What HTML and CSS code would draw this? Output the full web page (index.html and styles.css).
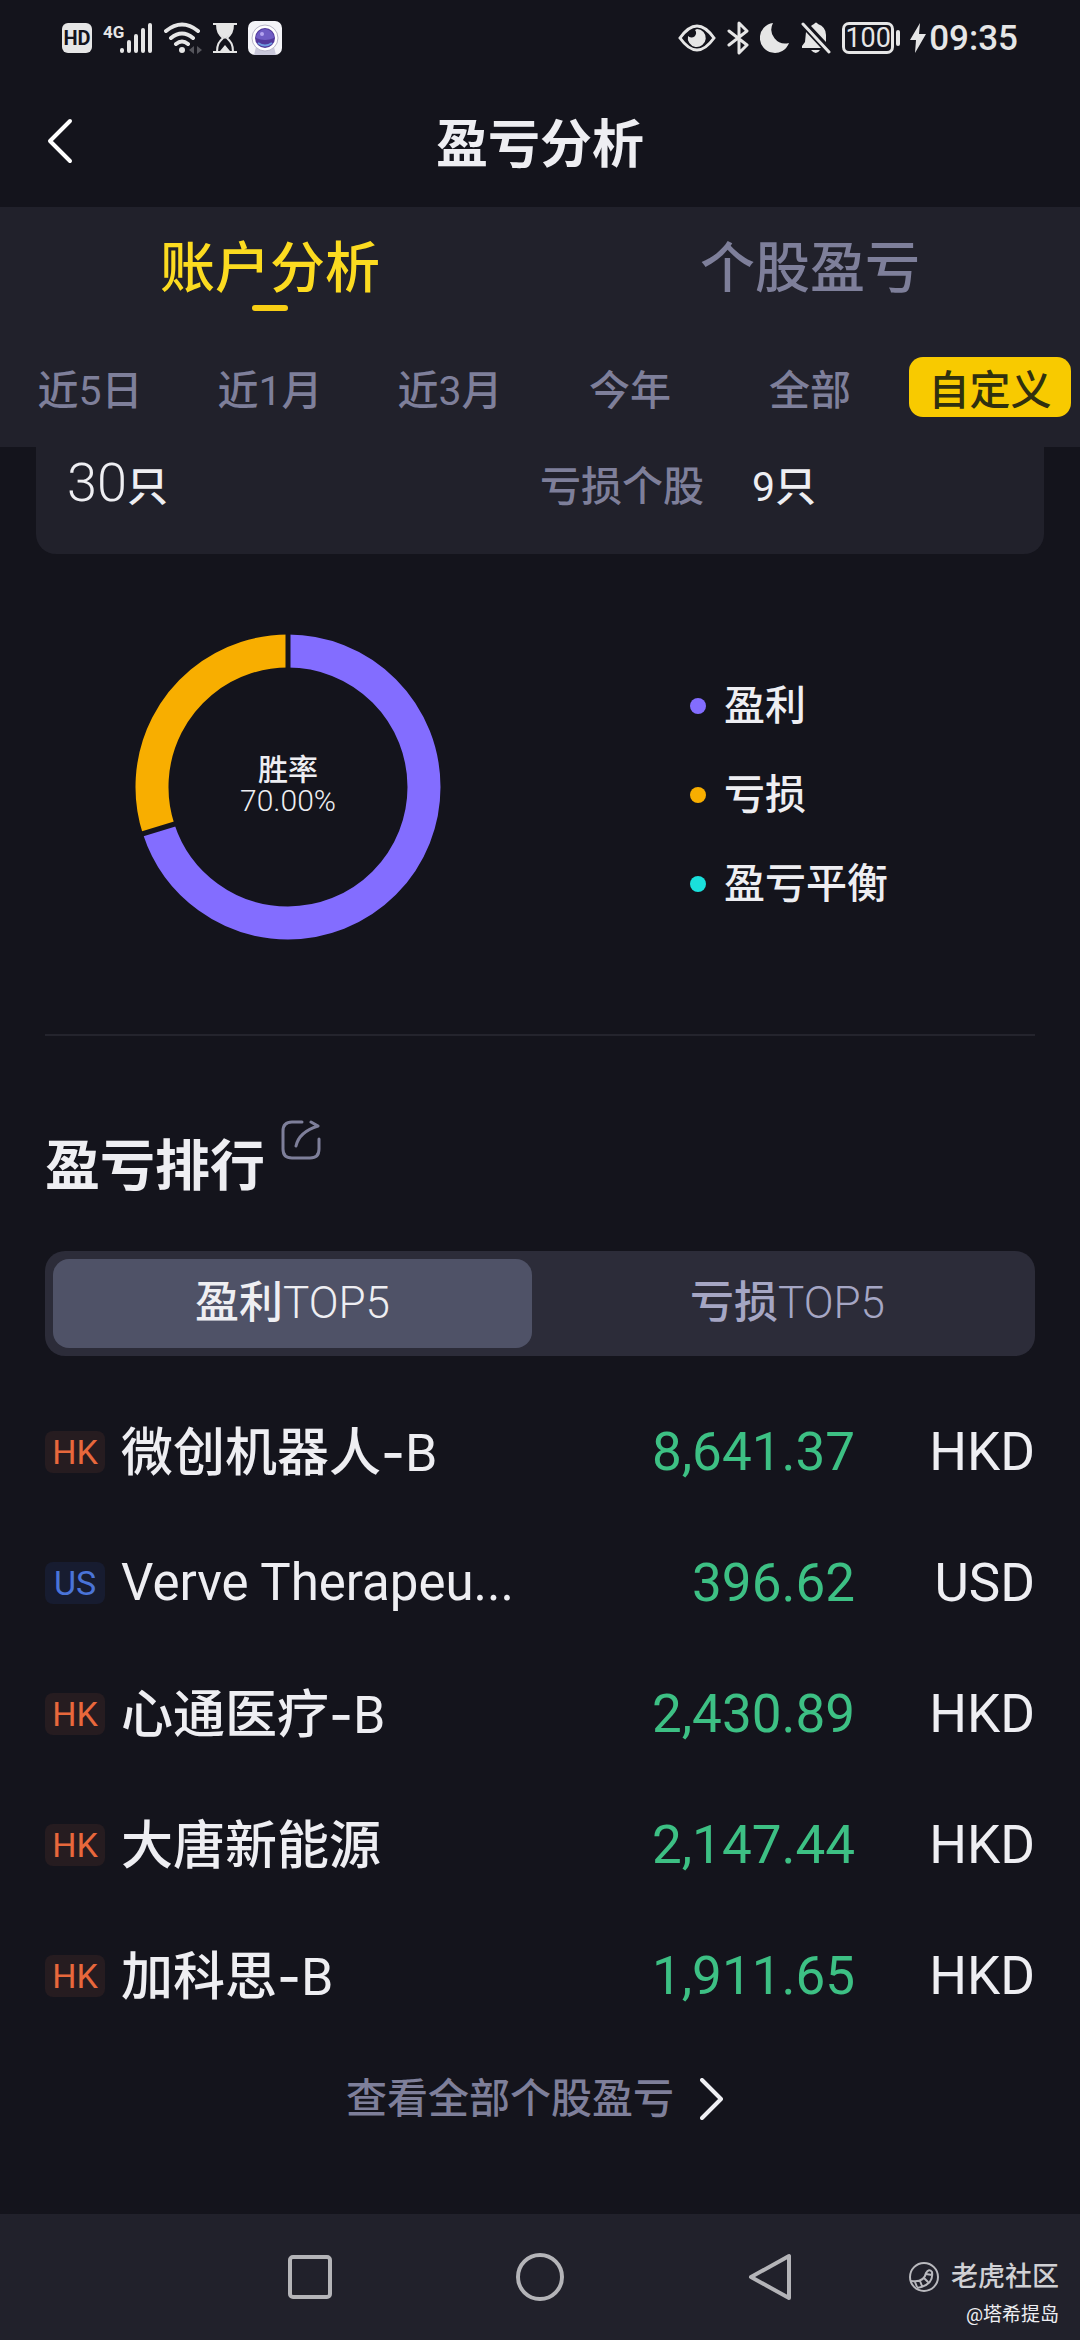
FILE: index.html
```html
<!DOCTYPE html>
<html lang="zh-CN">
<head>
<meta charset="utf-8">
<meta name="viewport" content="width=device-width, initial-scale=1">
<title>盈亏分析</title>
<link rel="stylesheet" href="styles.css">
</head>
<body>
<div class="app">
  <div class="status">
    <div class="status-group">
      <span class="hd">HD</span>
      <svg width="50" height="32" viewBox="0 0 50 32" fill="none" stroke="#e6e6e6" stroke-width="4" stroke-linecap="round"><text class="net" x="0" y="16">4G</text><path d="M19 28v1M26 20v9M33 14v15M40 8v21M47 3v26"/></svg>
      <svg width="38" height="32" viewBox="0 0 38 32" fill="none" stroke="#e6e6e6" stroke-width="4" stroke-linecap="round"><path d="M2 9Q18 -4 34 9M7 16q11-9 22 0M12 22q6-5 12 0"/><circle cx="18" cy="28" r="3" fill="#e6e6e6" stroke="none"/><path d="M30 24v8l-5-4zM33 24v8l5-4z" fill="#55555c" stroke="none"/></svg>
      <svg width="24" height="32" viewBox="0 0 24 32" fill="none" stroke="#e6e6e6" stroke-width="2"><path d="M0 2h24M0 30h24M4 2c0 8 2 10 6 14c-4 4-6 6-6 14M20 2c0 8-2 10-6 14c4 4 6 6 6 14"/><path d="M4 2h16c0 8-3 10-8 15C7 12 4 10 4 2zM7 29l5-6l5 6z" fill="#e6e6e6" stroke="none"/></svg>
      <svg width="34" height="34" viewBox="0 0 34 34"><rect width="34" height="34" rx="7" fill="#f4f4f8"/><path d="M8 26h18l2 8H6z" fill="#c9c8da"/><circle cx="17" cy="17" r="13" fill="#fff" stroke="#b7b4c8"/><circle cx="17" cy="17" r="10" fill="#51389a"/><path d="M8 17a9 9 0 0 1 18 0q-9 4-18 0" fill="#6f5cc4"/><path d="M10 22q7 5 14 0" stroke="#6f9be0" stroke-width="2" fill="none"/><circle cx="14" cy="13" r="2" fill="#b4a4f0"/></svg>
    </div>
    <div class="status-group">
      <svg width="38" height="28" viewBox="0 0 38 28" fill="none" stroke="#e6e6e6" stroke-width="3"><path d="M2 14Q19-10 36 14Q19 38 2 14z"/><path d="M19 5a9 9 0 1 1-9 7a4 4 0 0 0 7-6z" fill="#e6e6e6" stroke="none"/></svg>
      <svg width="22" height="34" viewBox="0 0 22 34" fill="none" stroke="#e6e6e6" stroke-width="3" stroke-linejoin="round" stroke-linecap="round"><path d="M2 10l18 14l-8 8V2l8 8L2 24"/></svg>
      <svg width="30" height="32" viewBox="0 0 30 32"><path d="M13 1A15 15 0 1 0 29 21A14 14 0 0 1 13 1z" fill="#e6e6e6"/></svg>
      <svg width="30" height="34" viewBox="0 0 30 34" fill="#e6e6e6"><path d="M10 5q1-1 3-2q2-3 4 0q8 3 8 11v7zM5 11L20 27H1v-2l3-4zM10 29h9q-4 6-9 0z"/><path d="M2 3l26 28" stroke="#e6e6e6" stroke-width="3" stroke-linecap="round"/></svg>
      <span class="battery">100</span>
      <svg class="bolt" width="16" height="30" viewBox="0 0 16 30"><path d="M10 0L0 17h6L5 30L16 11H9z" fill="#e6e6e6"/></svg>
      <span class="time">09:35</span>
    </div>
  </div>

  <header class="titlebar">
    <button class="back" aria-label="返回"><svg width="30" height="48" viewBox="0 0 30 48" fill="none" stroke="#fff" stroke-width="4" stroke-linecap="round" stroke-linejoin="round"><path d="M26 4L6 24L26 44"/></svg></button>
    <h1>盈亏分析</h1>
  </header>

  <div class="panel">
    <nav class="tabs">
      <button class="tab tab-on">账户分析</button>
      <button class="tab">个股盈亏</button>
    </nav>
    <div class="ranges">
      <button class="range">近<span class="lat">5</span>日</button>
      <button class="range">近<span class="lat">1</span>月</button>
      <button class="range">近<span class="lat">3</span>月</button>
      <button class="range">今年</button>
      <button class="range">全部</button>
      <button class="range range-on">自定义</button>
    </div>
  </div>

  <main>
    <section class="counts">
      <p class="count"><span class="count-big">30</span>只</p>
      <p class="count"><span class="count-label">亏损个股</span><span class="lat">9</span>只</p>
    </section>

    <section class="chart">
      <div class="donut">
        <svg width="306" height="306" viewBox="-153 -153 306 306" fill="none" stroke-width="33">
          <circle r="136" pathLength="100" stroke="#836dff" stroke-dasharray="70 30" transform="rotate(-90)"/>
          <circle r="136" pathLength="100" stroke="#f8ae00" stroke-dasharray="30 70" transform="rotate(162)"/>
          <path d="M0-116V-153M-110 36L-146 47" stroke="#14141c" stroke-width="5"/>
        </svg>
        <div class="donut-label">
          <p>胜率</p>
          <p class="light">70.00%</p>
        </div>
      </div>
      <ul class="legend">
        <li class="win">盈利</li>
        <li class="loss">亏损</li>
        <li class="even">盈亏平衡</li>
      </ul>
    </section>

    <section class="rank">
      <div class="rank-head">
        <h2>盈亏排行</h2>
        <button class="share" aria-label="分享"><svg width="40" height="40" viewBox="0 0 40 40" fill="none" stroke="#7e7f9a" stroke-width="3" stroke-linecap="round" stroke-linejoin="round"><path d="M21 2H11Q2 2 2 11V29Q2 38 11 38H29Q38 38 38 29V19M15 26Q18 12 37 6M30 2L37 6"/></svg></button>
      </div>
      <div class="segment">
        <button class="seg seg-on">盈利<span class="light">TOP5</span></button>
        <button class="seg">亏损<span class="light">TOP5</span></button>
      </div>
      <table class="list">
        <tbody>
          <tr><td class="mk"><span class="badge">HK</span></td><td class="name">微创机器人<span class="dash">-</span><span class="lat">B</span></td><td class="amt">8,641.37</td><td class="cur">HKD</td></tr>
          <tr><td class="mk"><span class="badge badge-us">US</span></td><td class="name name-en">Verve Therapeu...</td><td class="amt">396.62</td><td class="cur">USD</td></tr>
          <tr><td class="mk"><span class="badge">HK</span></td><td class="name">心通医疗<span class="dash">-</span><span class="lat">B</span></td><td class="amt">2,430.89</td><td class="cur">HKD</td></tr>
          <tr><td class="mk"><span class="badge">HK</span></td><td class="name">大唐新能源</td><td class="amt">2,147.44</td><td class="cur">HKD</td></tr>
          <tr><td class="mk"><span class="badge">HK</span></td><td class="name">加科思<span class="dash">-</span><span class="lat">B</span></td><td class="amt">1,911.65</td><td class="cur">HKD</td></tr>
        </tbody>
      </table>
      <a class="more" href="#">查看全部个股盈亏<svg width="24" height="42" viewBox="0 0 24 42" fill="none" stroke="#f0f0f4" stroke-width="4" stroke-linecap="round" stroke-linejoin="round"><path d="M2 2L21 21L2 40"/></svg></a>
    </section>
  </main>

  <footer class="sysnav">
    <button aria-label="最近任务"><svg width="48" height="50" viewBox="0 0 48 50" fill="none" stroke="#b4b4b8" stroke-width="4"><rect x="4" y="5" width="40" height="40" rx="3"/></svg></button>
    <button aria-label="主屏幕"><svg width="48" height="50" viewBox="0 0 48 50" fill="none" stroke="#b4b4b8" stroke-width="4"><circle cx="24" cy="25" r="22"/></svg></button>
    <button aria-label="后退"><svg width="48" height="50" viewBox="0 0 48 50" fill="none" stroke="#b4b4b8" stroke-width="4" stroke-linejoin="round"><path d="M43 4V46L5 25z"/></svg></button>
    <div class="credit">
      <p class="brand"><svg width="32" height="32" viewBox="0 0 32 32" fill="none" stroke="#b9b9be" stroke-width="2"><circle cx="16" cy="16" r="14"/><path d="M3 20Q16 22 18 12Q21 7 24 11Q26 24 9 27M7 21l2 5M12 20l2 5M16 17l4 4M18 13l6 1"/></svg>老虎社区</p>
      <p class="author">@塔希提岛</p>
    </div>
  </footer>
</div>
</body>
</html>
```

FILE: styles.css
```css
* { box-sizing: border-box; }
body, h1, h2, p, ul { margin: 0; padding: 0; }
body {
  background: #14141c;
  color: #eeeef2;
  font-family: Roboto, "Noto Sans CJK SC", sans-serif;
  font-weight: 400;
}
button { border: 0; padding: 0; background: none; color: inherit; font: inherit; }
svg { display: block; flex: none; }
.lat { font-weight: 400; }
.light { font-weight: 300; }
.app { display: flex; flex-direction: column; min-height: 100vh; }

/* system status bar */
.status { display: flex; justify-content: space-between; align-items: center; height: 76px; padding: 0 62px; color: #e6e6e6; }
.status-group { display: flex; align-items: center; gap: 11px; }
.hd { width: 30px; border-radius: 6px; background: #e6e6e6; color: #14141c; font-size: 20px; font-weight: 700; line-height: 30px; text-align: center; }
.net { fill: #e6e6e6; stroke: none; font-size: 17px; font-weight: 700; }
.battery { position: relative; width: 52px; margin-right: 5px; border: 3px solid #e6e6e6; border-radius: 7px; font-size: 27px; line-height: 26px; text-align: center; }
.battery::after { content: ""; position: absolute; right: -9px; top: 5px; width: 4px; height: 16px; border-radius: 2px; background: #e6e6e6; }
.bolt { margin-right: -8px; }
.time { font-size: 35px; font-weight: 500; }

/* title */
.titlebar { position: relative; display: flex; align-items: center; justify-content: center; height: 131px; padding-top: 8px; }
.back { position: absolute; left: 44px; top: 41px; }
h1 { font-size: 52px; font-weight: 700; line-height: 76px; }

/* tabs and date ranges */
.panel { background: #21212b; padding-bottom: 30px; }
.tabs { display: grid; grid-template-columns: 1fr 1fr; }
.tab { display: flex; flex-direction: column; align-items: center; padding-top: 24px; color: #7e7f9a; font-size: 55px; font-weight: 500; line-height: 74px; }
.tab-on { color: #fcdb20; }
.tab-on::after { content: ""; width: 36px; height: 6px; border-radius: 3px; background: #f8ce14; }
.ranges { display: grid; grid-template-columns: repeat(6, 1fr); margin-top: 46px; }
.range { margin: 0 9px; padding-top: 8px; border-radius: 14px; color: #7e7f9a; font-size: 41px; font-weight: 500; line-height: 52px; white-space: nowrap; }
.range-on { background: #f8ca00; color: #30300f; }

/* counters */
.counts { display: grid; grid-template-columns: 1fr 1fr; margin: 0 36px; padding: 0 31px 27px; border-radius: 0 0 20px 20px; background: #21212b; }
.count { display: flex; align-items: baseline; font-size: 41px; font-weight: 500; line-height: 80px; }
.count-big { font-size: 54px; font-weight: 300; line-height: 72px; }
.count-label { margin-right: 48px; color: #7e7f9a; }

/* win rate chart */
.chart { display: flex; align-items: center; margin: 0 45px; padding: 80px 0 94px 90px; border-bottom: 2px solid #24242d; }
.donut { display: grid; place-items: center; margin-right: 249px; }
.donut > * { grid-area: 1 / 1; }
.donut-label { padding-bottom: 4px; font-size: 30px; font-weight: 500; line-height: 31px; text-align: center; }
.donut-label .light { font-weight: 300; }
.legend { display: grid; gap: 29px; padding-top: 16px; list-style: none; font-size: 41px; font-weight: 500; line-height: 60px; }
.legend li { display: flex; align-items: center; gap: 18px; }
.legend li::before { content: ""; width: 16px; height: 16px; border-radius: 50%; background: currentColor; }
.win::before { color: #836dff; }
.loss::before { color: #f8ae00; }
.even::before { color: #1ae0dc; }

/* ranking */
.rank { display: flex; flex-direction: column; padding: 84px 45px 60px; }
.rank-head { display: flex; gap: 16px; }
h2 { padding-top: 6px; font-size: 55px; font-weight: 700; line-height: 80px; }
.share { align-self: flex-start; }
.segment { display: grid; grid-template-columns: 1fr 1fr; column-gap: 16px; margin-top: 45px; padding: 8px; border-radius: 20px; background: #2c2c39; }
.seg { border-radius: 16px; color: #a5a6c4; font-size: 44px; font-weight: 500; line-height: 89px; }
.seg-on { background: #4f5267; color: #eeeef2; }
.list { width: 100%; margin-top: 30px; border-collapse: collapse; }
.list td { height: 131px; padding: 0; font-size: 53px; line-height: 76px; white-space: nowrap; }
.mk { width: 76px; }
.badge { display: block; width: 60px; border-radius: 8px; background: #261c20; color: #e8683c; font-size: 34px; line-height: 42px; text-align: center; }
.badge-us { background: #171c30; color: #4a74d8; }
.list .name { padding-top: 4px; font-size: 52px; font-weight: 500; }
.list .name-en { padding-top: 0; font-size: 51px; font-weight: 400; }
.dash { font-family: Inter, sans-serif; }
.amt { color: #3dc084; text-align: right; }
.cur { width: 180px; text-align: right; }
.more { display: flex; align-items: center; justify-content: center; gap: 26px; margin-top: 28px; padding-right: 10px; color: #7e7f9a; font-size: 41px; font-weight: 500; line-height: 60px; text-decoration: none; }

/* system navigation */
.sysnav { position: relative; display: flex; justify-content: center; gap: 182px; margin-top: auto; padding: 38px 0; background: #21212b; }
.credit { position: absolute; right: 21px; bottom: 11px; text-align: right; }
.brand { display: flex; align-items: center; gap: 11px; color: #d0d0d4; font-size: 27px; font-weight: 500; line-height: 40px; }
.author { margin-top: 4px; font-size: 19px; line-height: 28px; }
```
